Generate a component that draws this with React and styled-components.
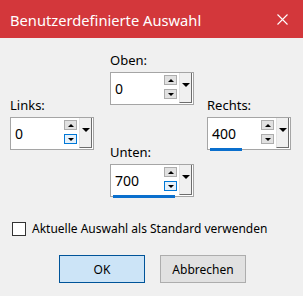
import React from 'react';
import styled, { createGlobalStyle } from 'styled-components';

const Global = createGlobalStyle`
  html, body { margin: 0; padding: 0; background: #f0f0f0; }
  body { font-family: "Segoe UI", "Noto Sans", "Open Sans", sans-serif; color: #000; }
`;

const Window = styled.div`
  width: 303px;
  height: 296px;
  background: #f0f0f0;
  display: flex;
  flex-direction: column;
  overflow: hidden;
`;

const TitleBar = styled.div`
  flex: none;
  height: 38px;
  background: #d3373b;
  color: #fff;
  display: flex;
  align-items: center;
  justify-content: space-between;
  padding: 0 15px 0 10px;
`;

const Title = styled.span`
  font-size: 14.7px;
  line-height: 20px;
  padding-top: 1px;
`;

const CloseIcon = styled.svg`
  width: 11px;
  height: 11px;
  display: block;
`;

const Columns = styled.div`
  display: flex;
  align-items: flex-start;
  padding-left: 10px;
`;

const Column = styled.div`
  width: 84px;
  margin-left: ${p => p.$left}px;
  padding-top: ${p => p.$top}px;
  display: flex;
  flex-direction: column;
  gap: 38px;
`;

const Field = styled.div`
  display: flex;
  flex-direction: column;
`;

const Label = styled.div`
  font-size: 13px;
  line-height: 18px;
  margin-bottom: 3px;
`;

const SpinBox = styled.div`
  position: relative;
  box-sizing: border-box;
  width: 84px;
  height: 33px;
  border: 1px solid #a5a5a5;
  background: #fff;
  display: flex;
  align-items: stretch;
`;

const Value = styled.div`
  flex: 1;
  display: flex;
  align-items: center;
  padding-left: 4px;
  padding-bottom: 1px;
  font-size: 14px;
`;

const SpinColumn = styled.div`
  width: 13px;
  display: flex;
  flex-direction: column;
  gap: 4px;
  padding-top: 2px;
  margin-right: 2px;
`;

const SpinButton = styled.div`
  box-sizing: border-box;
  height: 10px;
  background: ${p => (p.$hot ? '#e5f1fb' : '#e1e1e1')};
  border: 1px solid ${p => (p.$hot ? '#0078d7' : '#adadad')};
  display: flex;
  align-items: center;
  justify-content: center;
`;

const Tri = styled.div`
  width: 0;
  height: 0;
  border-left: ${p => p.$w}px solid transparent;
  border-right: ${p => p.$w}px solid transparent;
  ${p => (p.$up ? 'border-bottom' : 'border-top')}: ${p => p.$h}px solid #000;
`;

const DropButton = styled.div`
  box-sizing: border-box;
  width: 13px;
  margin: 0 1px 1px 0;
  background: #f0f0f0;
  border-left: 1px solid #e3e3e3;
  border-right: 1px solid #6d6d6d;
  border-bottom: 1px solid #6d6d6d;
  display: flex;
  justify-content: center;
  padding-top: 10px;
`;

const Bar = styled.div`
  position: absolute;
  left: 2px;
  bottom: -2px;
  height: 3px;
  width: ${p => p.$w}px;
  background: #0a6fcd;
`;

const CheckRow = styled.label`
  display: flex;
  align-items: center;
  gap: 6px;
  padding-left: 12px;
  margin-top: 24px;
  font-size: 12px;
  line-height: 16px;
`;

const CheckBox = styled.span`
  box-sizing: border-box;
  width: 14px;
  height: 14px;
  border: 1px solid #333;
  background: #fff;
`;

const ButtonRow = styled.div`
  display: flex;
  gap: 15px;
  padding-left: 59px;
  margin-top: 18px;
`;

const Button = styled.div`
  box-sizing: border-box;
  width: 86px;
  height: 28px;
  display: flex;
  align-items: center;
  justify-content: center;
  font-size: 12px;
  background: ${p => (p.$primary ? '#cce4f7' : '#e1e1e1')};
  border: 1px solid ${p => (p.$primary ? '#005499' : '#adadad')};
`;

function Spin({ label, value, hotDown, bar }) {
  return (
    <Field>
      <Label>{label}</Label>
      <SpinBox>
        <Value>{value}</Value>
        <SpinColumn>
          <SpinButton><Tri $up $w={3} $h={3} /></SpinButton>
          <SpinButton $hot={hotDown}><Tri $w={3} $h={3} /></SpinButton>
        </SpinColumn>
        <DropButton><Tri $w={4} $h={4} /></DropButton>
        {bar ? <Bar $w={bar} /> : null}
      </SpinBox>
    </Field>
  );
}

export default function App() {
  return (
    <>
      <Global />
      <Window>
        <TitleBar>
          <Title>Benutzerdefinierte Auswahl</Title>
          <CloseIcon viewBox="0 0 11 11">
            <path d="M0.5 0.5 L10.5 10.5 M10.5 0.5 L0.5 10.5" stroke="#fff" strokeWidth="1.1" fill="none" />
          </CloseIcon>
        </TitleBar>
        <Columns>
          <Column $left={0} $top={58}>
            <Spin label="Links:" value="0" hotDown />
          </Column>
          <Column $left={16} $top={13}>
            <Spin label="Oben:" value="0" />
            <Spin label="Unten:" value="700" hotDown bar={62} />
          </Column>
          <Column $left={13} $top={58}>
            <Spin label="Rechts:" value="400" bar={32} />
          </Column>
        </Columns>
        <CheckRow>
          <CheckBox />
          <span>Aktuelle Auswahl als Standard verwenden</span>
        </CheckRow>
        <ButtonRow>
          <Button $primary>OK</Button>
          <Button>Abbrechen</Button>
        </ButtonRow>
      </Window>
    </>
  );
}
